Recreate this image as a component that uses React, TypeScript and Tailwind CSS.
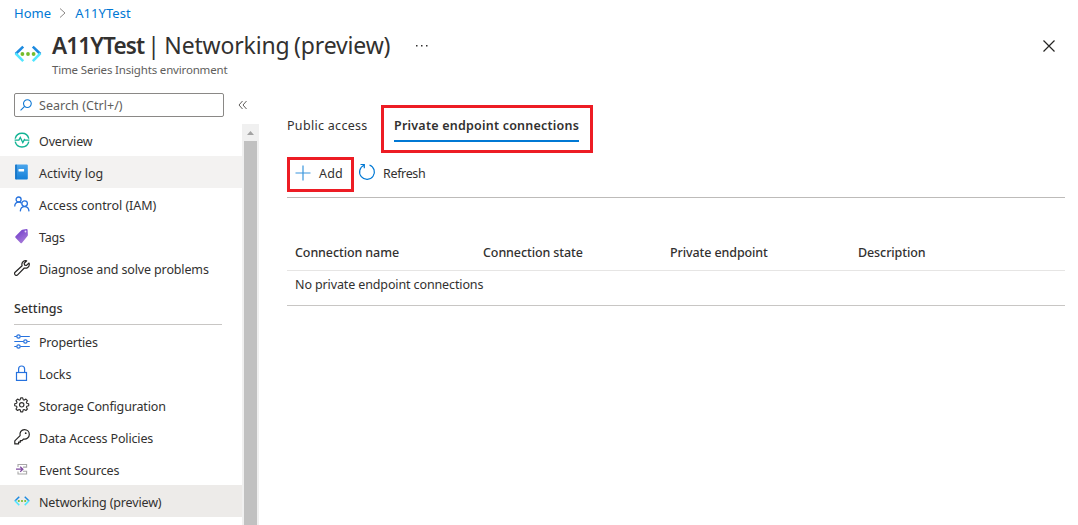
import React from "react";

type IconProps = { className?: string };

const NetworkIcon = ({ className = "" }: IconProps) => (
  <svg viewBox="0 0 28 18" className={className} fill="none">
    <path d="M9.2 1.6 1.6 9" stroke="#1c8ae0" strokeWidth="2.6" />
    <path d="M1.6 8.4 9.2 16.2" stroke="#50e6ff" strokeWidth="2.6" />
    <path d="M18.8 1.6 26.4 9" stroke="#1c8ae0" strokeWidth="2.6" />
    <path d="M26.4 8.4 18.8 16.2" stroke="#50e6ff" strokeWidth="2.6" />
    <circle cx="8.4" cy="9" r="1.9" fill="#76bc2d" />
    <circle cx="14" cy="9" r="1.9" fill="#76bc2d" />
    <circle cx="19.6" cy="9" r="1.9" fill="#76bc2d" />
  </svg>
);

const OverviewIcon = () => (
  <svg viewBox="0 0 16 16" className="size-4" fill="none" stroke="#12b394" strokeWidth="1.4">
    <path d="M1.2 6.6A7 7 0 0 1 14.8 6.6M14.8 9.6A7 7 0 0 1 1.2 9.6" />
    <path d="M0.6 8.1h4.3l1.4-2.6 2.5 5 1.6-2.9.6.5h4.4" strokeWidth="1.3" />
  </svg>
);

const LogIcon = () => (
  <svg viewBox="0 0 16 16" className="size-4">
    <defs>
      <linearGradient id="log" x1="0" y1="0" x2="0" y2="1">
        <stop offset="0" stopColor="#4aa5ec" />
        <stop offset="1" stopColor="#1580d8" />
      </linearGradient>
    </defs>
    <rect x="1.2" y="0.6" width="12.6" height="14.8" rx="1" fill="url(#log)" />
    <rect x="1.2" y="0.6" width="1.6" height="14.8" rx="0.8" fill="#1673c4" />
    <rect x="4.5" y="5" width="5.6" height="2.4" rx="0.3" fill="#fff" />
  </svg>
);

const PeopleIcon = () => (
  <svg viewBox="0 0 16 16" className="size-4" fill="none" stroke="#2672de" strokeWidth="1.3">
    <circle cx="4.6" cy="3.5" r="2.5" />
    <path d="M0.7 10.6C0.8 7.6 2.4 6.2 4.8 6.2c1.2 0 2 .3 2.7 1" />
    <circle cx="10.6" cy="7.6" r="2.8" />
    <path d="M6.3 15.4c.2-3 1.8-4.8 4.3-4.8s4.2 1.8 4.4 4.8" />
  </svg>
);

const TagIcon = () => (
  <svg viewBox="0 0 16 16" className="size-4">
    <defs>
      <linearGradient id="tag" x1="0" y1="0" x2="0.6" y2="1">
        <stop offset="0" stopColor="#6a35c9" />
        <stop offset="1" stopColor="#a67ad8" />
      </linearGradient>
    </defs>
    <path d="M8.3 1.8 12.6.9q.9 0 1 .8l.3 5.3q0 .6-.4 1L7.9 14.9q-.7.6-1.4 0L1.5 9.7q-.6-.7 0-1.4L7.4 2.3q.4-.4.9-.5z" fill="url(#tag)" />
    <circle cx="11.5" cy="3.5" r="0.9" fill="#e8dcfa" />
  </svg>
);

const WrenchIcon = () => (
  <svg viewBox="0 0 16 16" className="size-4" fill="none" stroke="#252423" strokeWidth="1.2" strokeLinejoin="round">
    <path d="M12.7.9C10.4.2 8.2 1.6 7.9 3.8c-.1.7 0 1.3.2 1.9L1.1 12.2c-.8.8-.7 1.9 0 2.6.7.7 1.8.7 2.5 0L10.3 8c2.6.8 5-1 5-3.5 0-.6-.1-1-.3-1.5l-2.5 2.4-1.9-.3-.4-1.8z" />
  </svg>
);

const PropertiesIcon = () => (
  <svg viewBox="0 0 16 16" className="size-4" fill="none" stroke="#2672de" strokeWidth="1.2">
    <path d="M0.3 3.5h2.4M6.3 3.5h9.5M0.3 8.5h9.2M13.2 8.5h2.6M0.3 13.5h2.4M6.3 13.5h9.5" />
    <circle cx="4.5" cy="3.5" r="1.7" />
    <circle cx="11.4" cy="8.5" r="1.7" />
    <circle cx="4.5" cy="13.5" r="1.7" />
  </svg>
);

const LockIcon = () => (
  <svg viewBox="0 0 16 16" className="size-4" fill="none" stroke="#2672de" strokeWidth="1.2">
    <rect x="2.5" y="7.5" width="10" height="7.9" />
    <path d="M4.6 7.4V4a3 3 0 0 1 6 0v3.4" />
  </svg>
);

const GearIcon = () => (
  <svg viewBox="0 0 16 16" className="size-4" fill="none" stroke="#323130" strokeWidth="1.15" strokeLinejoin="round">
    <path d="M6.7.8h2l.5 1.9 1 .4 1.7-1 1.5 1.5-1 1.7.4 1 1.9.5v2l-1.9.5-.4 1 1 1.7-1.5 1.5-1.7-1-1 .4-.5 1.9h-2l-.5-1.9-1-.4-1.7 1L2 12l1-1.7-.4-1L.7 8.8v-2l1.9-.5.4-1L2 3.6l1.5-1.5 1.7 1 1-.4z" />
    <circle cx="7.7" cy="7.8" r="2.2" />
  </svg>
);

const KeyIcon = () => (
  <svg viewBox="0 0 16 16" className="size-4" fill="none" stroke="#252423" strokeWidth="1.2" strokeLinejoin="round">
    <path d="M6.1 6.6C5.4 3.4 7.4.7 10.4.7c2.7 0 4.9 2 4.9 4.7 0 3-2.6 5.2-5.7 4.6L8 11.6H6.3v1.6H4.6v1.7H.8v-3z" />
    <circle cx="11.7" cy="4.2" r="0.9" fill="#252423" stroke="none" />
  </svg>
);

const EventIcon = () => (
  <svg viewBox="0 0 16 16" className="size-4" fill="none">
    <path d="M4 6V3.5h8.6v2.6H9M4 10.4V13h8.600v-2.700H9" stroke="#a8a8a8" strokeWidth="1.1" />
    <path d="M2 8.2h6.6M6.2 5.7 8.9 8.200l-2.700 2.500" stroke="#7f4a9f" strokeWidth="1.2" />
  </svg>
);

type Item = { label: string; icon: React.ReactNode; text?: string; row?: string };

const mainItems: Item[] = [
  { label: "Overview", icon: <OverviewIcon />, text: "tracking-[-0.12px]" },
  { label: "Activity log", icon: <LogIcon />, text: "tracking-[0.03px]", row: "bg-[#f3f2f1]" },
  { label: "Access control (IAM)", icon: <PeopleIcon />, text: "tracking-[-0.04px]" },
  { label: "Tags", icon: <TagIcon />, text: "tracking-[-0.2px]" },
  { label: "Diagnose and solve problems", icon: <WrenchIcon />, text: "tracking-[-0.14px]" },
];

const settingsItems: Item[] = [
  { label: "Properties", icon: <PropertiesIcon />, text: "tracking-[-0.2px]" },
  { label: "Locks", icon: <LockIcon />, text: "tracking-[-0.1px]" },
  { label: "Storage Configuration", icon: <GearIcon />, text: "tracking-[-0.15px]" },
  { label: "Data Access Policies", icon: <KeyIcon />, text: "tracking-[-0.14px]" },
  { label: "Event Sources", icon: <EventIcon />, text: "tracking-[-0.12px]" },
  { label: "Networking (preview)", icon: <NetworkIcon className="size-4" />, text: "tracking-[-0.14px]", row: "bg-[#edebe9]" },
];

const MenuItem = ({ label, icon, text = "", row = "" }: Item) => (
  <li className={`flex h-8 items-center pl-3.5 ${row}`}>
    <span className="flex w-[25px] shrink-0">{icon}</span>
    <span className={`whitespace-nowrap pt-[3px] ${text}`}>{label}</span>
  </li>
);

export default function App() {
  return (
    <div className="flex h-[525px] w-[1078px] flex-col overflow-hidden bg-white font-['Noto_Sans',sans-serif] text-[12.5px] leading-4 text-[#323130]">
      <header className="flex h-[93px] shrink-0 flex-col pl-3.5">
        <nav className="flex h-[27px] items-center pb-0.5 text-[13px] text-[#0078d4]">
          <a className="tracking-[0.05px]">Home</a>
          <svg viewBox="0 0 8 10" className="mr-2 ml-2 h-2.5 w-2" fill="none" stroke="#8a8886"><path d="M1 .5 6 5 1 9.5" /></svg>
          <a className="tracking-[0.05px]">A11YTest</a>
        </nav>
        <div className="flex">
          <NetworkIcon className="mt-[18px] h-[18px] w-7 shrink-0" />
          <div className="ml-2.5 flex flex-col">
            <h1 className="flex h-[35px] items-baseline gap-[3px] whitespace-nowrap pt-0.5 text-[23px] leading-8">
              <span className="text-[22.5px] font-semibold tracking-[-0.85px]">A11YTest</span>
              <span className="tracking-[-0.17px] [word-spacing:-1.2px]">| Networking (preview)</span>
            </h1>
            <p className="text-[11.5px] tracking-[-0.17px] text-[#605e5c]">Time Series Insights environment</p>
          </div>
          <svg viewBox="0 0 12 3" className="mt-[17px] ml-[26px] h-[3px] w-3" fill="#323130"><path d="M0 1h1.5v1.5H0zM5 1h1.5v1.5H5zM10 1h1.5v1.5H10z" /></svg>
          <svg viewBox="0 0 14 14" className="mt-3 mr-[22px] ml-auto size-3.5" stroke="#252423" strokeWidth="1.2"><path d="m1.5 1.5 11 11m0-11-11 11" /></svg>
        </div>
      </header>

      <div className="flex min-h-0 flex-1">
        <aside className="flex w-[259px] shrink-0 flex-col">
          <div className="flex h-[31px] shrink-0 items-start pl-3.5">
            <div className="flex h-6 w-[210px] items-center rounded-xs border border-[#8a8886] pl-[5px] text-[#605e5c]">
              <svg viewBox="0 0 13 13" className="mr-[7px] size-3 shrink-0" fill="none" stroke="#0f78d4" strokeWidth="1.2"><circle cx="8" cy="5" r="4.2" /><path d="M5 8 .6 12.4" /></svg>
              <span className="pt-0.5 tracking-[0.05px]">Search (Ctrl+/)</span>
            </div>
            <svg viewBox="0 0 10 10" className="mt-[7px] ml-3.5 size-2.5" fill="none" stroke="#605e5c"><path d="M4.5 1 1 5l3.5 4M8.5 1 5 5l3.5 4" /></svg>
          </div>
          <div className="flex min-h-0 flex-1">
            <div className="w-[242px] overflow-hidden">
              <ul>{mainItems.map((i) => <MenuItem key={i.label} {...i} />)}</ul>
              <h2 className="mr-5 ml-3.5 flex h-[41px] items-center border-b border-[#c8c6c4] pt-2.5 font-medium">Settings</h2>
              <ul>{settingsItems.map((i) => <MenuItem key={i.label} {...i} />)}</ul>
            </div>
            <div className="flex w-[17px] flex-col items-center bg-[#f0f0f0]">
              <svg viewBox="0 0 17 17" className="size-[17px] shrink-0" fill="#a3a3a3"><path d="M5 11 8.5 7 12 11z" /></svg>
              <div className="w-[13px] flex-1 bg-[#c1c1c1]" />
            </div>
          </div>
        </aside>

        <main className="ml-7 w-[778px] pt-3">
          <div className="flex h-[52px] items-start">
            <span className="w-[94px] whitespace-nowrap pt-[13px] tracking-[0.3px]">Public access</span>
            <div className="h-12 w-[212px] border-[3px] border-[#ed1c24] pr-[11px] pl-2.5">
              <div className="flex h-[34px] items-center whitespace-nowrap border-b-2 border-[#0078d4] pt-[3px] font-semibold tracking-[0.22px]">Private endpoint connections</div>
            </div>
          </div>
          <div className="flex h-[41px] items-start border-b border-[#bdbbb9]">
            <div className="flex h-[35px] w-[67px] items-center border-[3px] border-[#ed1c24] pl-[5px]">
              <svg viewBox="0 0 16 16" className="-mt-1 mr-2 size-4 shrink-0" stroke="#3a96dd" strokeWidth="1.2"><path d="M8 .5v15M.5 8h15" /></svg>
              <span className="-mt-0.5 tracking-[0.2px]">Add</span>
            </div>
            <svg viewBox="0 0 18 18" className="mt-1.5 ml-1 size-[18px]" fill="none" stroke="#0078d4" strokeWidth="1.2"><path d="M6 2.2A7.4 7.4 0 1 0 11.5 2M2.5 1.5H6.3V5.3" /></svg>
            <span className="mt-[9px] ml-[7px] tracking-[-0.35px]">Refresh</span>
          </div>
          <div className="mt-9 grid h-[37px] grid-cols-[188px_187px_188px_1fr] items-center border-b border-[#e6e5e4] pt-0.5 pl-2 font-medium tracking-[-0.1px]">
            <span>Connection name</span>
            <span>Connection state</span>
            <span>Private endpoint</span>
            <span>Description</span>
          </div>
          <div className="flex h-[35px] items-start border-b border-[#c8c6c4] pt-1.5 pl-2 tracking-[-0.12px]">No private endpoint connections</div>
        </main>
      </div>
    </div>
  );
}
